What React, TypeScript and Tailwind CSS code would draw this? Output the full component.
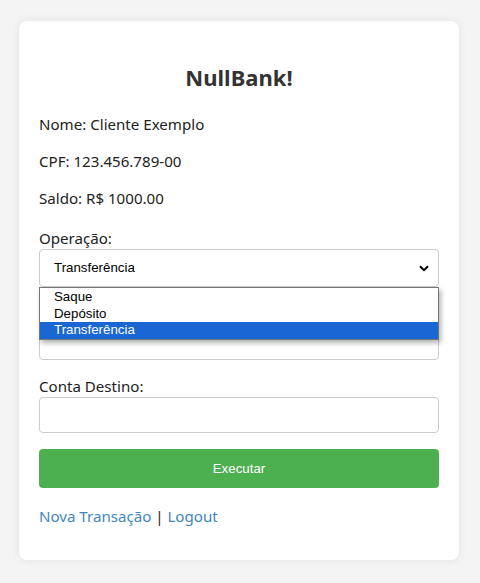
import { useState } from "react";

const OPTIONS = ["Saque", "Depósito", "Transferência"];

export default function App() {
  const [op] = useState("Transferência");

  return (
    <div className="min-h-[583px] bg-[#f4f4f4] pt-[21px] px-[19px] font-['Noto_Sans',sans-serif] text-[#222]">
      <div className="w-[440px] rounded-[8px] bg-white px-5 pt-5 pb-[20px] shadow-[0_0_10px_rgba(0,0,0,0.08)]">
        <h2 className="mt-5 mb-5 text-center text-[22px] leading-8 font-bold text-[#333]">NullBank!</h2>

        <p className="text-[15.1px] leading-[22px]">Nome: Cliente Exemplo</p>
        <p className="mt-[15px] text-[15.1px] leading-[22px]">CPF: 123.456.789-00</p>
        <p className="mt-[15px] text-[15.1px] leading-[22px]">Saldo: R$ 1000.00</p>

        <form className="mt-[19px]" onSubmit={(e) => e.preventDefault()}>
          <label className="block text-[15.1px] leading-[21px]">Operação:</label>
          <div className="relative">
            {/* closed select */}
            <div className="flex h-[38px] items-center justify-between rounded-[4px] border border-[#ccc] bg-white pl-[14px] pr-[9px] font-['Liberation_Sans',sans-serif] text-[13.3px] text-black">
              <span>{op}</span>
              <svg width="10" height="7" viewBox="0 0 10 7" className="text-black">
                <path d="M1 1.2 5 5.2 9 1.2" fill="none" stroke="currentColor" strokeWidth="2" />
              </svg>
            </div>
            {/* open option list */}
            <div className="absolute left-0 right-0 top-[38px] z-10 border border-[#767676] bg-white pt-[1px] shadow-[2px_3px_5px_rgba(0,0,0,0.3)] font-['Liberation_Sans',sans-serif] text-[13.3px] leading-[16.5px] text-black">
              {OPTIONS.map((o) => (
                <div
                  key={o}
                  className={`pl-[14px] ${o === op ? "bg-[#1a66d2] text-white" : ""}`}
                >
                  {o}
                </div>
              ))}
            </div>
          </div>

          <label className="mt-[16px] block text-[15.1px] leading-[21px]">Valor:</label>
          <input className="block h-[36px] w-full rounded-[4px] border border-[#ccc] px-2" />

          <label className="mt-[16px] block text-[15.1px] leading-[21px]">Conta Destino:</label>
          <input className="block h-[36px] w-full rounded-[4px] border border-[#ccc] px-2" />

          <button
            type="submit"
            className="mt-[16px] block h-[39px] w-full rounded-[4px] bg-[#4caf50] font-['Liberation_Sans',sans-serif] text-[13.3px] text-white"
          >
            Executar
          </button>
        </form>

        <p className="mt-[17px] text-[15.1px] leading-[22px]">
          <a href="#" className="text-[#3f87c0]">Nova Transação</a>
          <span className="text-[#222]"> | </span>
          <a href="#" className="text-[#3f87c0]">Logout</a>
        </p>
        <div className="h-[13px]" />
      </div>
    </div>
  );
}
